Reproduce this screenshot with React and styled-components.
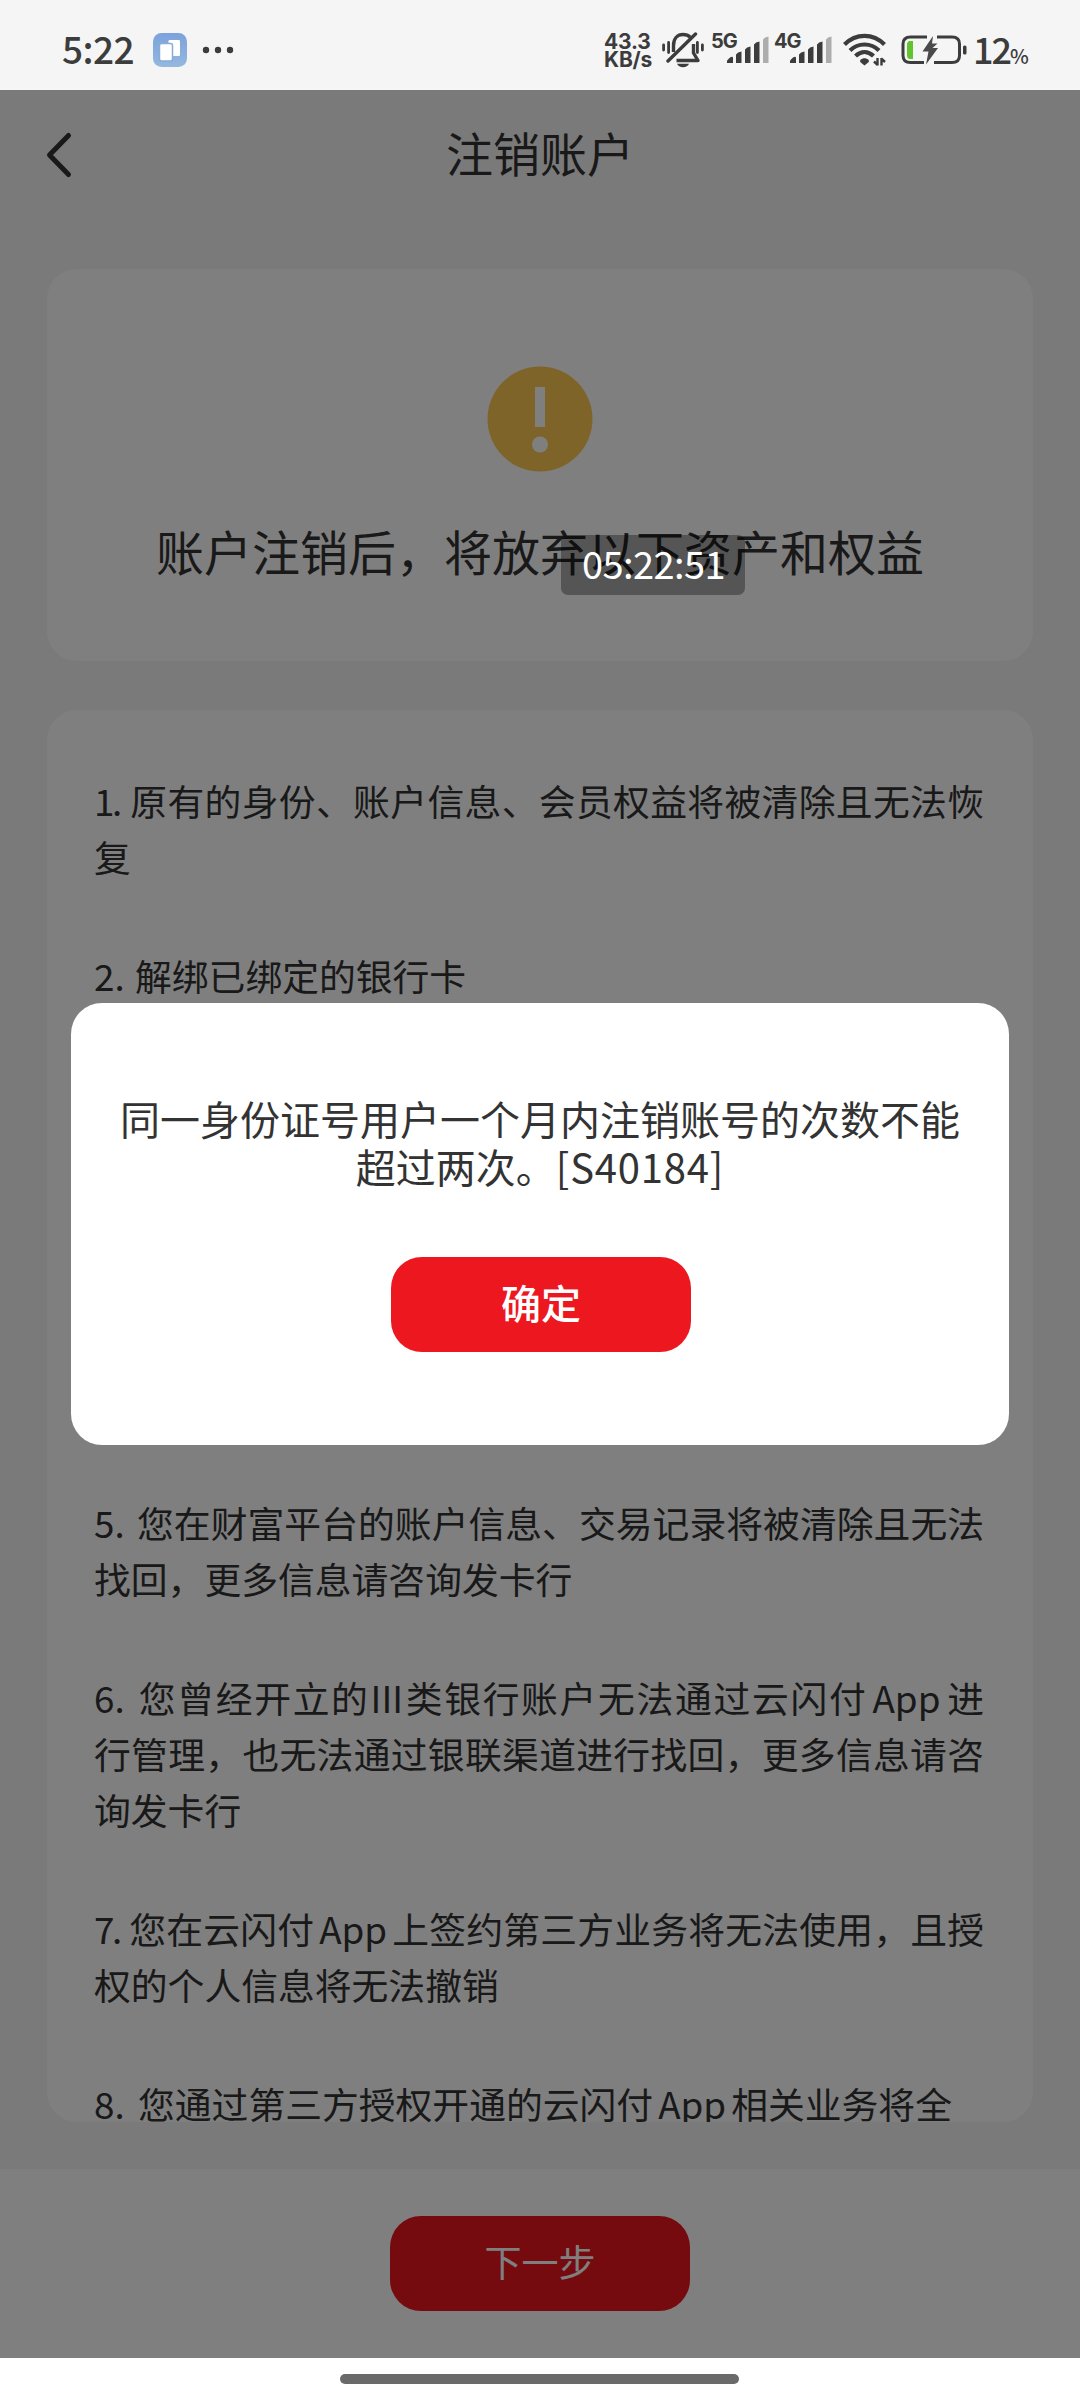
import React from 'react'
import styled, { createGlobalStyle, css } from 'styled-components'

const GlobalStyle = createGlobalStyle`
  * {
    box-sizing: border-box;
  }

  body {
    margin: 0;
    background: #fff;
    font-family: 'Noto Sans CJK SC', 'Noto Sans', sans-serif;
  }
`;

const Screen = styled.div`
  position: relative;
  width: 1080px;
  height: 2400px;
  display: flex;
  flex-direction: column;
  overflow: hidden;
  color: #333;
`;

/* status bar */

const StatusBar = styled.div`
  height: 90px;
  flex: none;
  display: flex;
  align-items: center;
  padding: 10px 56px 0 62px;
  background: #f5f5f5;
  color: #3c3c3c;
  line-height: 1;

  svg {
    display: block;
    flex: none;
  }
`;

const Clock = styled.div`
  width: 91px;
  padding-bottom: 3px;
  font-size: 37px;
  font-weight: 500;
  letter-spacing: -0.6px;
`;

const Speed = styled.div`
  width: 58px;
  padding-top: 2px;
  font-family: Inter, 'Noto Sans', sans-serif;
  font-size: 21px;
  font-weight: 700;
  line-height: 18px;
  letter-spacing: -0.2px;
`;

const Right = styled.div`
  display: flex;
  align-items: center;
  margin-left: auto;
`;

const SignalBox = styled.div`
  position: relative;
  width: 57px;
  height: 34px;
  margin-left: ${props => props.$left}px;
`;

const Generation = styled.span`
  position: absolute;
  left: -1px;
  top: 0;
  font-family: Inter, 'Noto Sans', sans-serif;
  font-size: 20px;
  font-weight: 700;
  line-height: 16px;
  letter-spacing: -1px;
`;

const Percent = styled.div`
  display: flex;
  align-items: baseline;
  width: 51px;
  margin-left: 6px;
  padding-bottom: 5px;
  font-size: 36px;
  font-weight: 500;
  letter-spacing: -2px;

  span {
    font-size: 20px;
  }
`;

/* page */

const Page = styled.div`
  position: relative;
  height: 2268px;
  flex: none;
  display: flex;
  flex-direction: column;
  background: #f5f5f5;
`;

const NavBar = styled.div`
  height: 130px;
  display: flex;
  align-items: center;
  padding: 0 46px;

  svg {
    flex: none;
  }
`;

const Title = styled.div`
  flex: 1;
  padding: 0 28px 6px 0;
  text-align: center;
  font-size: 47px;
  line-height: 60px;
`;

const Card = styled.div`
  margin: 0 47px;
  background: #fff;
  border-radius: 30px;
`;

const WarningCard = styled(Card)`
  height: 392px;
  margin-top: 49px;
  display: flex;
  flex-direction: column;
  align-items: center;
  padding-top: 97px;
`;

const WarningText = styled.div`
  margin-top: 43px;
  font-size: 48px;
  line-height: 70px;
  white-space: nowrap;
`;

const RulesCard = styled(Card)`
  height: 1412px;
  margin-top: 49px;
  padding: 62px 49px 0 47px;
  overflow: hidden;
`;

const Rule = styled.div`
  margin-bottom: ${props => props.$gap || 63}px;
  font-size: 36.8px;
  line-height: 56px;
`;

const Line = styled.div`
  white-space: nowrap;

  ${props => props.$full && css`
    text-align: justify;
    text-align-last: justify;
  `}
`;

const RuleNumber = styled.span`
  display: inline-block;
  width: ${props => props.$width}px;
  text-align: left;
  text-align-last: left;
  letter-spacing: ${props => (props.$width < 40 ? '-2.5px' : 0)};
`;

const Latin = styled.span`
  display: inline-block;
  margin: 0 ${props => (props.$numeral ? 1 : 5)}px;
  text-align-last: left;
`;

const Footer = styled.div`
  height: 189px;
  margin-top: auto;
  display: flex;
  justify-content: center;
  padding-top: 47px;
  background: #fff;
`;

const Button = styled.button`
  width: 300px;
  height: 95px;
  padding: 0 0 5px;
  border: 0;
  border-radius: 31px;
  background: #ed171f;
  color: #fff;
  font-family: inherit;
  font-size: ${props => props.$size}px;
  font-weight: ${props => props.$weight || 400};
`;

const ConfirmButton = styled(Button)`
  margin-left: 2px;
`;

const Mask = styled.div`
  position: absolute;
  inset: 0;
  display: flex;
  align-items: flex-start;
  justify-content: center;
  padding-top: 913px;
  background: rgba(0, 0, 0, 0.5);
`;

const Dialog = styled.div`
  width: 938px;
  height: 442px;
  display: flex;
  flex-direction: column;
  align-items: center;
  padding-top: 91px;
  border-radius: 31px;
  background: #fff;
`;

const Message = styled.div`
  margin-bottom: 67px;
  text-align: center;
  font-size: 40px;
  line-height: 48px;
  white-space: nowrap;
`;

const ErrorCode = styled.span`
  letter-spacing: 0.8px;
`;

const TimeToast = styled.div`
  position: absolute;
  left: 561px;
  top: 535px;
  width: 184px;
  height: 60px;
  padding-left: 1px;
  border-radius: 7px;
  background: rgba(0, 0, 0, 0.33);
  color: #fff;
  text-align: center;
  font-size: 38px;
  line-height: 56px;
  letter-spacing: -0.6px;
`;

const HomeArea = styled.div`
  flex: 1;
  display: flex;
  justify-content: center;
  padding: 16px 1px 0 0;
  background: #fff;
`;

const HomePill = styled.div`
  width: 399px;
  height: 10px;
  border-radius: 5px;
  background: #6a6a6a;
`;

const AppBadge = () => (
  <svg width="34" height="34" viewBox="0 0 34 34">
    <defs>
      <linearGradient id="badge" x1="0" y1="0" x2="0" y2="1">
        <stop offset="0" stopColor="#7ba2dc" />
        <stop offset="1" stopColor="#95b8de" />
      </linearGradient>
    </defs>
    <rect width="34" height="34" rx="8.5" fill="url(#badge)" />
    <rect x="15.5" y="7" width="11.5" height="16" rx="1.2" fill="#fff" />
    <rect x="6.5" y="10.5" width="13" height="17.5" rx="2" fill="#fff" stroke="#86abdc" strokeWidth="1.5" />
  </svg>
)

const DotsSvg = styled.svg`
  margin-left: 15px;
`;

const Dots = () => (
  <DotsSvg width="32" height="8" viewBox="0 0 32 8" fill="#3c3c3c">
    <circle cx="4" cy="4" r="3.2" />
    <circle cx="16" cy="4" r="3.2" />
    <circle cx="28" cy="4" r="3.2" />
  </DotsSvg>
)

const MuteBell = () => (
  <svg width="42" height="36" viewBox="0 0 42 36" fill="none" stroke="#3c3c3c" strokeWidth="3.4">
    <path d="M11.5 20V13.500C11.500 6.500 15.500 2.500 21 2.500C24 2.500 26.500 3.500 28.300 5.200" />
    <path d="M14.500 28.500H36L31.500 21V12" strokeLinejoin="round" />
    <path d="M6 29L33.500 2" strokeLinecap="round" />
    <path d="M15 31.800H27C26 34.200 24 35.200 21 35.200S16 34.200 15 31.800Z" fill="#3c3c3c" stroke="none" />
    <path d="M1.600 13V18M6.600 10.500V20.500M35.400 10.500V20.500M40.400 13V18" strokeWidth="2.8" strokeLinecap="round" />
  </svg>
)

const Bars = () => (
  <svg width="57" height="34" viewBox="0 0 57 34" fill="#3c3c3c">
    <path d="M15 30V27.500L18 24.500Q21 23 21 25V30Z" />
    <path d="M24 30V21.500Q25.500 19 29.500 18.500V30Z" />
    <path d="M33 30V16.500Q34.500 14 38.500 13.500V30Z" />
    <path d="M42 30V11.500Q43.500 9 47.500 8.500V30Z" />
    <path d="M51 30V6.500Q52.500 4 56.500 3.500V30Z" fill="#adadad" />
  </svg>
)

const WifiSvg = styled.svg`
  margin-left: 11px;
`;

const Wifi = () => (
  <WifiSvg width="44" height="34" viewBox="0 0 44 34" fill="none" stroke="#3c3c3c" strokeWidth="4.2">
    <path d="M1.500 11.500C13 0 30 0 41.500 11.500" />
    <path d="M7 17.500C15 9.500 28 9.500 36 17.500" />
    <path d="M12.500 23C18 17.700 25 17.700 30.500 23" />
    <path d="M17.200 27C20 24.800 23 24.800 25.800 27V29L21.500 32.500L17.200 29Z" fill="#3c3c3c" stroke="none" />
    <path d="M34.500 32.500V25M34.800 32L31 28.500M38.500 25V32.500M38.200 25.500L42 29" strokeWidth="2.4" />
  </WifiSvg>
)

const BatterySvg = styled.svg`
  margin-left: 14px;
`;

const Battery = () => (
  <BatterySvg width="66" height="32" viewBox="0 0 66 32">
    <path d="M26 3H9.500Q2 3 2 10V21.500Q2 28.500 9.500 28.500H23" fill="none" stroke="#3c3c3c" strokeWidth="3" />
    <path d="M36 3H51Q58.500 3 58.500 10V21.500Q58.500 28.500 51 28.500H33" fill="none" stroke="#3c3c3c" strokeWidth="3" />
    <path d="M12 7V25H9Q6 25 6 21V11Q6 7 9 7Z" fill="#62c42c" />
    <path d="M32 2L21.500 17.500H27.500L25 30.500L37 14H31.500L36.500 9.500H31Z" fill="#4a4a4a" />
    <rect x="62" y="11.5" width="3.5" height="9" rx="1.5" fill="#3c3c3c" />
  </BatterySvg>
)

const BackIcon = () => (
  <svg width="28" height="48" viewBox="0 0 28 48" fill="none" stroke="#333" strokeWidth="5" strokeLinecap="round" strokeLinejoin="round">
    <path d="M22.500 4.500L3.500 24L22.500 43.500" />
  </svg>
)

const WarningIcon = () => (
  <svg width="106" height="106" viewBox="0 0 106 106">
    <circle cx="53" cy="53" r="52.5" fill="#ffc854" />
    <rect x="48" y="21" width="10" height="40" fill="#fff" />
    <circle cx="53" cy="78.5" r="8" fill="#fff" />
  </svg>
)

const rules = [
  { no: 1, width: 36, lines: ['原有的身份、账户信息、会员权益将被清除且无法恢', '复'] },
  { no: 2, width: 41, lines: ['解绑已绑定的银行卡'], gap: 491 },
  { no: 5, width: 43, lines: ['您在财富平台的账户信息、交易记录将被清除且无法', '找回，更多信息请咨询发卡行'] },
  { no: 6, width: 43, lines: ['您曾经开立的III类银行账户无法通过云闪付App进', '行管理，也无法通过银联渠道进行找回，更多信息请咨', '询发卡行'] },
  { no: 7, width: 35, lines: ['您在云闪付App上签约第三方业务将无法使用，且授', '权的个人信息将无法撤销'] },
  { no: 8, width: 44, lines: ['您通过第三方授权开通的云闪付App相关业务将全'] },
]

const Signal = ({ label, left }) => (
  <SignalBox $left={left}>
    <Bars />
    <Generation>{label}</Generation>
  </SignalBox>
)

// latin words get a little air from the hanzi around them
const spaced = text => text.split(/([A-Za-z]+)/).map((part, i) => (
  i % 2 ? <Latin key={i} $numeral={part === 'III'}>{part}</Latin> : part
))

const App = () => {
  return (
    <Screen>
      <GlobalStyle />
      <StatusBar>
        <Clock>5:22</Clock>
        <AppBadge />
        <Dots />
        <Right>
          <Speed>43.3<br />KB/s</Speed>
          <MuteBell />
          <Signal label="5G" left={8} />
          <Signal label="4G" left={6} />
          <Wifi />
          <Battery />
          <Percent>12<span>%</span></Percent>
        </Right>
      </StatusBar>
      <Page>
        <NavBar>
          <BackIcon />
          <Title>注销账户</Title>
        </NavBar>
        <WarningCard>
          <WarningIcon />
          <WarningText>账户注销后，将放弃以下资产和权益</WarningText>
        </WarningCard>
        <RulesCard>
          {rules.map(rule => (
            <Rule key={rule.no} $gap={rule.gap}>
              {rule.lines.map((line, i) => (
                <Line key={line} $full={i < rule.lines.length - 1}>
                  {i === 0 && <RuleNumber $width={rule.width}>{rule.no}.</RuleNumber>}
                  {spaced(line)}
                </Line>
              ))}
            </Rule>
          ))}
        </RulesCard>
        <Footer>
          <Button $size={37}>下一步</Button>
        </Footer>
        <Mask>
          <Dialog>
            <Message>
              同一身份证号用户一个月内注销账号的次数不能<br />
              超过两次。<ErrorCode>[S40184]</ErrorCode>
            </Message>
            <ConfirmButton $size={40} $weight={500}>确定</ConfirmButton>
          </Dialog>
        </Mask>
      </Page>
      <HomeArea>
        <HomePill />
      </HomeArea>
      <TimeToast>05:22:51</TimeToast>
    </Screen>
  )
}
export default App
